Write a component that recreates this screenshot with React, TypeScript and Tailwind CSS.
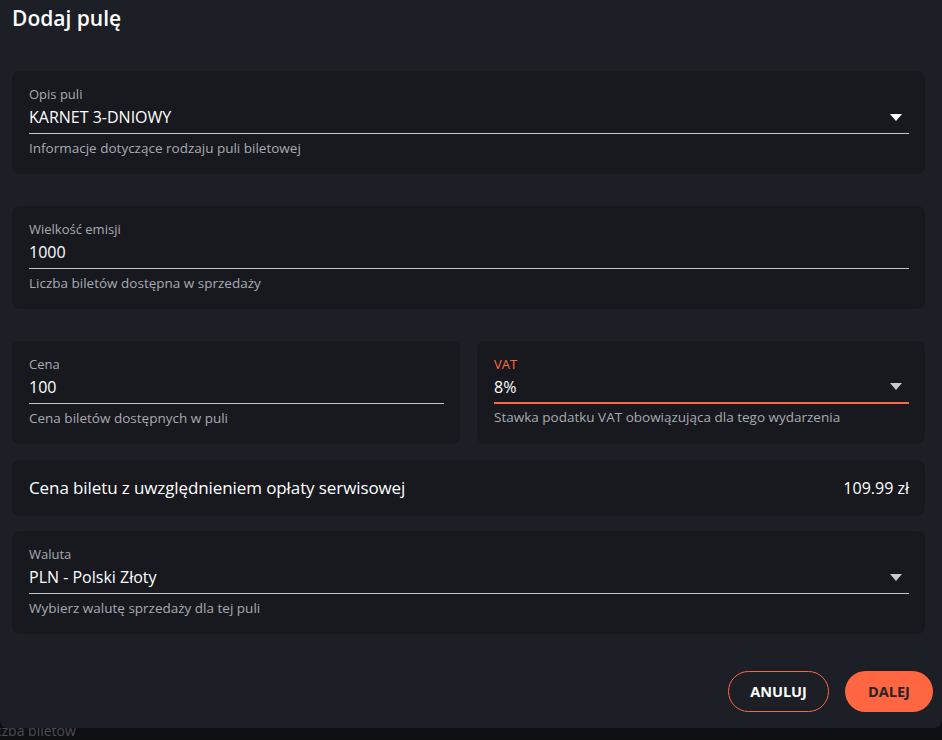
import React from 'react'

const font = { fontFamily: '"Open Sans", "Noto Sans", sans-serif' }

function Arrow({ light }: { light?: boolean }) {
  return (
    <svg width="12" height="7" viewBox="0 0 12 7" className="shrink-0">
      <path d="M0 0 L12 0 L6 7 Z" fill={light ? '#ffffff' : '#c9c9cc'} />
    </svg>
  )
}

type FieldProps = {
  label: string
  value: string
  helper: string
  select?: boolean
  light?: boolean
  active?: boolean
}

function Field({ label, value, helper, select, light, active }: FieldProps) {
  return (
    <div className="rounded-lg bg-[#17191f] pl-[17px] pr-4 pt-4 pb-[19px]">
      <p className={`text-[13px] leading-[14px] ${active ? 'text-[#ff6a45]' : 'text-[#a9aab0]'}`}>{label}</p>
      <div
        className={`flex h-[33px] items-center justify-between pr-[7px] ${
          active ? 'border-b-2 border-[#ff6641]' : 'border-b border-[#c4c5c8]'
        }`}
      >
        <span className="text-[16px] font-medium leading-5 text-white">{value}</span>
        {select && <Arrow light={light} />}
      </div>
      <p className={`${active ? 'mt-[6px]' : 'mt-[7px]'} text-[13.5px] leading-[14px] text-[#a9aab0]`}>{helper}</p>
    </div>
  )
}

export default function App() {
  return (
    <div className="h-[740px] w-[942px] overflow-hidden bg-[#0f1014]" style={font}>
      <div className="flex h-[728px] flex-col rounded-b-lg bg-[#1c1f26]">
        <h1 className="pl-3 pt-[6px] text-[21px] font-semibold leading-6 text-white">Dodaj pulę</h1>

        <div className="ml-3 mr-[17px] mt-[41px] flex flex-col">
          <Field
            label="Opis puli"
            value="KARNET 3-DNIOWY"
            helper="Informacje dotyczące rodzaju puli biletowej"
            select
            light
          />
          <div className="mt-8">
            <Field label="Wielkość emisji" value="1000" helper="Liczba biletów dostępna w sprzedaży" />
          </div>
          <div className="mt-8 grid grid-cols-2 gap-[17px]">
            <Field label="Cena" value="100" helper="Cena biletów dostępnych w puli" />
            <Field
              label="VAT"
              value="8%"
              helper="Stawka podatku VAT obowiązująca dla tego wydarzenia"
              select
              active
            />
          </div>
          <div className="mt-4 flex h-[56px] items-center justify-between rounded-lg bg-[#17191f] pl-[17px] pr-4">
            <span className="text-[17px] font-medium tracking-[-0.1px] text-white">
              Cena biletu z uwzględnieniem opłaty serwisowej
            </span>
            <span className="text-[16px] font-medium text-white">109.99 zł</span>
          </div>
          <div className="mt-[15px]">
            <Field
              label="Waluta"
              value="PLN - Polski Złoty"
              helper="Wybierz walutę sprzedaży dla tej puli"
              select
            />
          </div>
        </div>

        <div className="mt-[37px] flex justify-end gap-4 pr-[9px]">
          <button
            type="button"
            className="h-[41px] w-[101px] rounded-full border border-[#ff6641] text-[14.5px] font-bold text-white"
          >
            ANULUJ
          </button>
          <button
            type="button"
            className="h-[41px] w-[88px] rounded-full bg-[#ff6641] text-[14.5px] font-bold text-[#23252b]"
          >
            DALEJ
          </button>
        </div>
      </div>
      <div className="h-3 overflow-hidden">
        <p className="-mt-[7px] -ml-[16px] text-[14px] leading-5 text-[#4a4c52]">Liczba biletów</p>
      </div>
    </div>
  )
}
